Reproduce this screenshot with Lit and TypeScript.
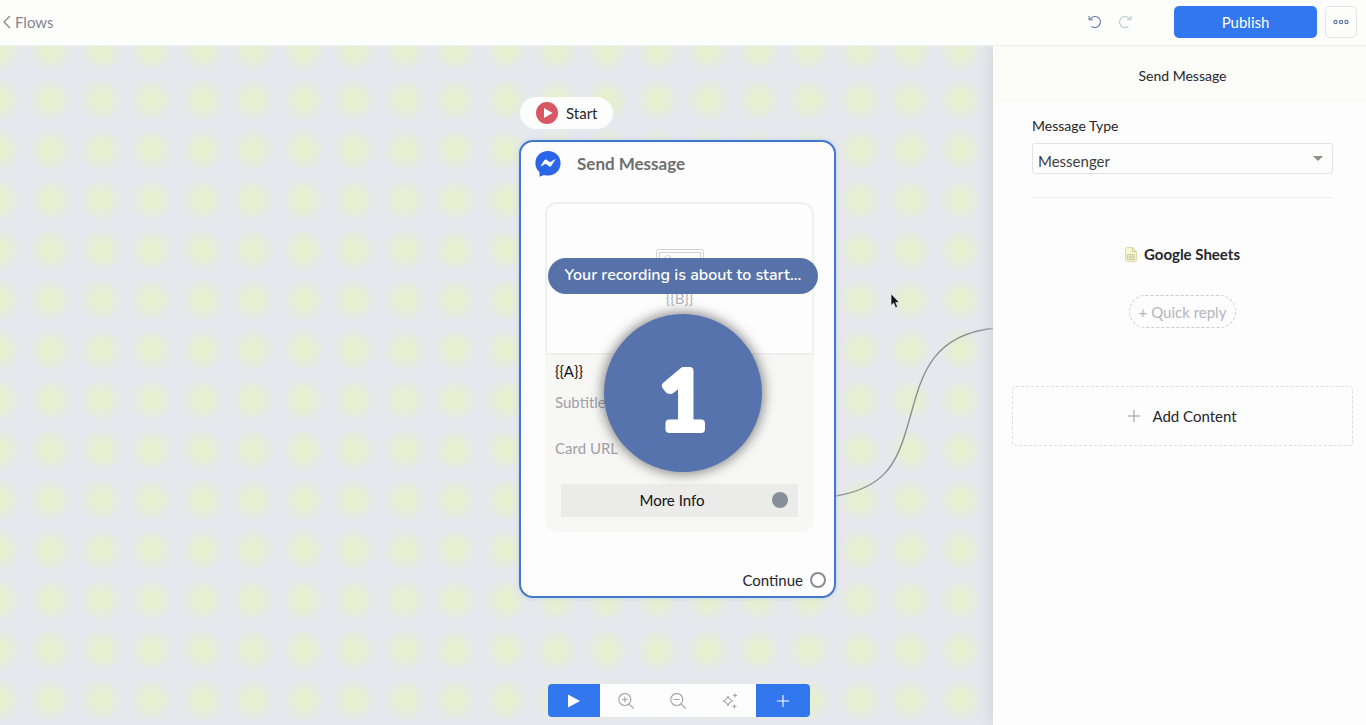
import { LitElement, html, css, svg } from "lit";
import { customElement, property } from "lit/decorators.js";

const icons = {
  back: svg`<svg width="8" height="14" viewBox="0 0 8 14"><path d="M7 1 1 7l6 6" fill="none" stroke="currentColor" stroke-width="1.3"/></svg>`,
  undo: svg`<svg width="14" height="14" viewBox="0 0 16 16" fill="none" stroke="currentColor" stroke-width="1.300"><path d="M2.300 5.200A6.300 6.300 0 1 1 4 13"/><path d="M1.300 1.200v4.200h4.400"/></svg>`,
  redo: svg`<svg width="14" height="14" viewBox="0 0 16 16" fill="none" stroke="currentColor" stroke-width="1.300"><path d="M13.700 5.200A6.300 6.300 0 1 0 12 13"/><path d="M14.700 1.200v4.200h-4.400"/></svg>`,
  dots: svg`<svg width="16" height="6" viewBox="0 0 16 6" fill="none" stroke="currentColor" stroke-width="1.2"><circle cx="2.5" cy="3" r="1.6"/><circle cx="8" cy="3" r="1.6"/><circle cx="13.5" cy="3" r="1.6"/></svg>`,
  start: svg`<svg width="22" height="22" viewBox="0 0 22 22"><circle cx="11" cy="11" r="11" fill="#d95763"/><path d="M8 6v10l8.6-5z" fill="#fff"/></svg>`,
  messenger: svg`<svg width="26" height="26" viewBox="0 0 26 26"><path d="M13 0C5.6 0 .4 5.2.4 12.2c0 3.8 1.6 6.700 4 8.800L4.600 25.800 9 23.900c1.300.4 2.600.5 4 .5 7.200 0 12.600-5.200 12.600-12.200S20.200 0 13 0z" fill="#2b66e8"/><path d="M5.200 15.700 9.300 9.300c.6-.9 1.700-1 2.500-.4l2.800 2.200c.3.200.6.200.9 0l5.300-3.400-4.400 7c-.6.9-1.700 1.100-2.500.5L11.100 13c-.3-.2-.6-.2-.9 0z" fill="#fff"/></svg>`,
  picture: svg`<svg width="48" height="36" viewBox="0 0 48 36" fill="none" stroke="#d0d0d4"><rect x=".5" y=".5" width="47" height="35" rx="2"/><rect x="3.500" y="3.500" width="41" height="29"/><circle cx="11.500" cy="9.500" r="3"/><path d="m4 29 13-12 9 8 7-6 11 9"/></svg>`,
  play: svg`<svg width="12" height="14" viewBox="0 0 12 14"><path d="M0 .5v13L12 7z" fill="currentColor"/></svg>`,
  zoomIn: svg`<svg width="16" height="16" viewBox="0 0 16 16" fill="none" stroke="currentColor" stroke-width="1.1"><circle cx="6.800" cy="6.500" r="6"/><path d="m11 10.800 4.600 4.700M6.800 3.700v5.600M4 6.500h5.600"/></svg>`,
  zoomOut: svg`<svg width="16" height="16" viewBox="0 0 16 16" fill="none" stroke="currentColor" stroke-width="1.1"><circle cx="6.800" cy="6.500" r="6"/><path d="m11 10.800 4.600 4.700M4 6.500h5.600"/></svg>`,
  sparkle: svg`<svg width="16" height="16" viewBox="0 0 16 16" fill="none" stroke="currentColor" stroke-width="1.1"><path d="M6 3c.7 3.200 1.800 4.300 5 5-3.200.7-4.300 1.800-5 5-.7-3.200-1.800-4.300-5-5 3.200-.7 4.300-1.800 5-5zM13 .5v4M11 2.500h4M12.500 11.500v4M10.500 13.500h4"/></svg>`,
  plus: svg`<svg width="12" height="12" viewBox="0 0 12 12"><path d="M6 0v12M0 6h12" stroke="currentColor" stroke-width="1.1"/></svg>`,
  sheet: svg`<svg width="12" height="15" viewBox="0 0 12 15"><path d="M1.500.5h6l4 4v8.500a1.500 1.500 0 0 1-1.500 1.500H2A1.500 1.500 0 0 1 .5 13V1.500z" fill="#f8f7d2" stroke="#dcdab0"/><path d="M7.500.5v4h4" fill="none" stroke="#c9c79a"/><path d="M2.500 7.500h7v5h-7zM2.500 10h7M5 7.500v5M7.300 7.500v5" fill="none" stroke="#cdcba2"/></svg>`,
  pointer: svg`<svg width="10" height="16" viewBox="0 0 10 16"><path d="M1 .8v11.800l2.700-2.500 1.900 4.600 2-.9-1.900-4.400 3.500-.2z" fill="#14161c" stroke="#fff" stroke-width=".6"/></svg>`,
};

const base = css`
  *, *::before, *::after { box-sizing: border-box; }
  button {
    font: inherit;
    color: inherit;
    border: 0;
    background: none;
    padding: 0;
    display: flex;
    align-items: center;
    justify-content: center;
  }
  svg { display: block; flex: none; }
`;

@customElement("flow-header")
export class FlowHeader extends LitElement {
  static styles = [base, css`
    :host { display: block; }
    .bar {
      display: flex;
      align-items: center;
      height: 46px;
      padding: 0 9px 2px 3px;
      background: #fdfdfc;
      border-bottom: 1px solid #efeff1;
    }
    .back {
      display: flex;
      align-items: center;
      gap: 4px;
      color: #85858c;
      text-decoration: none;
    }
    .history { display: flex; gap: 16px; margin: 0 42px 0 auto; }
    .undo { color: #647da6; }
    .redo { color: #b4cdd2; }
    .publish {
      width: 143px;
      height: 32px;
      border-radius: 5px;
      background: #3277ee;
      color: #fff;
    }
    .more {
      width: 32px;
      height: 32px;
      margin-left: 8px;
      border: 1px solid #e2e4ea;
      border-radius: 5px;
      color: #6078a8;
    }
  `];

  render() {
    return html`
      <header class="bar">
        <a class="back" href="#">${icons.back}<span>Flows</span></a>
        <div class="history">
          <button class="undo" aria-label="Undo">${icons.undo}</button>
          <button class="redo" aria-label="Redo">${icons.redo}</button>
        </div>
        <button class="publish">Publish</button>
        <button class="more" aria-label="More">${icons.dots}</button>
      </header>
    `;
  }
}

@customElement("message-node")
export class MessageNode extends LitElement {
  static styles = [base, css`
    :host { display: block; }
    .node {
      padding: 9px 8px 6px 14px;
      border: 2px solid #4277cc;
      border-radius: 14px;
      background: #fdfdfd;
      box-shadow: 0 0 5px #b9d2ea;
    }
    .head { display: flex; align-items: center; gap: 16px; height: 26px; }
    .name { font-size: 17px; font-weight: 700; color: #6e706f; }
    .card { margin: 25px 12px 0 10px; }
    .media {
      display: flex;
      flex-direction: column;
      align-items: center;
      height: 153px;
      padding-top: 45px;
      gap: 3px;
      border: 2px solid #efefed;
      border-radius: 12px 12px 0 0;
      color: #b4b4bd;
    }
    .body {
      padding: 6px 16px 15px 10px;
      border-radius: 0 0 12px 12px;
      background: #f7f7f6;
      color: #a0a0a4;
    }
    .line { height: 20px; margin-bottom: 11px; }
    .line.title { color: #111; }
    .line.url { margin: 26px 0; }
    .action {
      position: relative;
      width: 100%;
      height: 33px;
      padding: 0 15px 1px 0;
      background: #ebebea;
      color: #111;
    }
    .action-wrap { margin-left: 6px; }
    .dot {
      position: absolute;
      right: 10px;
      top: 8px;
      width: 16px;
      height: 16px;
      border-radius: 50%;
      background: #868f99;
    }
    .foot {
      display: flex;
      justify-content: flex-end;
      align-items: center;
      gap: 7px;
      margin-top: 38px;
      color: #25262b;
    }
    .port {
      width: 16px;
      height: 16px;
      border: 2px solid #8c8c93;
      border-radius: 50%;
    }
  `];

  render() {
    return html`
      <article class="node">
        <div class="head">${icons.messenger}<span class="name">Send Message</span></div>
        <div class="card">
          <div class="media">${icons.picture}<span>{{B}}</span></div>
          <div class="body">
            <div class="line title">{{A}}</div>
            <div class="line">Subtitle</div>
            <div class="line url">Card URL</div>
            <div class="action-wrap">
              <button class="action">More Info<span class="dot"></span></button>
            </div>
          </div>
        </div>
        <div class="foot"><span>Continue</span><span class="port"></span></div>
      </article>
    `;
  }
}

@customElement("message-panel")
export class MessagePanel extends LitElement {
  static styles = [base, css`
    :host { display: block; }
    .panel {
      height: 100%;
      background: #fdfdfd;
      color: #25262b;
      box-shadow: 0 0 16px #c8d0d4;
    }
    .title {
      margin: 0;
      height: 57px;
      padding: 20px 13px 0 19px;
      background: #fbfbf7;
      font-size: 14px;
      font-weight: 400;
      text-align: center;
    }
    .content { padding: 13px 13px 0 19px; }
    .field { margin: 0 20px; padding-bottom: 23px; border-bottom: 1px solid #ededee; }
    .field label { display: block; margin-bottom: 7px; font-size: 14px; }
    .picker { position: relative; }
    .picker::after {
      content: "";
      position: absolute;
      right: 10px;
      top: 13px;
      border: 5px solid transparent;
      border-top-color: #8f9083;
      border-bottom: 0;
    }
    select {
      display: block;
      width: 100%;
      height: 31px;
      padding: 4px 5px 0;
      border: 1px solid #e3e3e6;
      border-radius: 3px;
      background: transparent;
      color: #3c3d42;
      font: inherit;
      appearance: none;
    }
    .sheets {
      display: flex;
      align-items: center;
      justify-content: center;
      gap: 7px;
      margin-top: 46px;
      font-weight: 700;
    }
    .reply {
      height: 33px;
      margin: 31px auto 0;
      padding: 0 9px;
      border: 1px dashed #cbcbd2;
      border-radius: 17px;
      color: #b5b5bd;
    }
    .add {
      width: 100%;
      height: 60px;
      margin-top: 58px;
      gap: 12px;
      border: 1px dashed #dcdce2;
      border-radius: 4px;
    }
    .add svg { color: #9a9a9f; }
  `];

  render() {
    return html`
      <aside class="panel">
        <h2 class="title">Send Message</h2>
        <div class="content">
          <div class="field">
            <label for="type">Message Type</label>
            <div class="picker">
              <select id="type"><option>Messenger</option></select>
            </div>
          </div>
          <div class="sheets">${icons.sheet}<span>Google Sheets</span></div>
          <button class="reply">+ Quick reply</button>
          <button class="add">${icons.plus}<span>Add Content</span></button>
        </div>
      </aside>
    `;
  }
}

@customElement("record-countdown")
export class RecordCountdown extends LitElement {
  @property({ type: Number }) count = 1;

  static styles = [base, css`
    :host { display: block; }
    .stack {
      display: flex;
      flex-direction: column;
      align-items: center;
      gap: 20px;
      color: #fff;
    }
    .note {
      height: 36px;
      padding: 0 17px;
      border-radius: 18px;
      background: #5672a9;
      font: 600 16px/35px Nunito, "Open Sans", "Noto Sans", sans-serif;
      white-space: nowrap;
    }
    .disc {
      border-radius: 50%;
      background: #5673ae;
      box-shadow: 0 0 12px 2px rgba(60, 62, 60, 0.6);
    }
    .digit {
      font: 400 82px Lato, sans-serif;
      fill: #fff;
      stroke: #fff;
      stroke-width: 8px;
      stroke-linejoin: round;
      text-anchor: middle;
    }
  `];

  render() {
    return html`
      <div class="stack" role="status">
        <div class="note">Your recording is about to start...</div>
        <svg class="disc" width="158" height="158" viewBox="0 0 158 158">
          <text class="digit" x="79" y="115">${this.count}</text>
        </svg>
      </div>
    `;
  }
}

@customElement("app-root")
export class AppRoot extends LitElement {
  static styles = [base, css`
    :host { display: block; }
    .app {
      position: relative;
      display: flex;
      flex-direction: column;
      height: 100vh;
      overflow: hidden;
      font: 15px/20px Lato, "Open Sans", sans-serif;
      background-color: #e6e8ee;
      background-image:
        radial-gradient(circle at 0 50%, rgba(231, 242, 196, 0.85), rgba(231, 242, 196, 0.6) 10px, rgba(231, 242, 196, 0) 22px),
        radial-gradient(circle at 100% 50%, rgba(231, 242, 196, 0.85), rgba(231, 242, 196, 0.6) 10px, rgba(231, 242, 196, 0) 22px);
      background-size: 51px 50px;
      background-position: 0 25px;
      background-repeat: round repeat;
    }
    .work { display: flex; flex: 1; min-height: 0; overflow: hidden; }
    .canvas { position: relative; flex: 1; min-width: 0; overflow: hidden; }
    .side { flex: none; width: 373px; position: relative; }
    .start {
      position: absolute;
      left: 520px;
      top: 51px;
      display: flex;
      align-items: center;
      gap: 8px;
      height: 32px;
      padding: 0 16px;
      border-radius: 16px;
      background: #fdfdfd;
      color: #25262b;
    }
    .message { position: absolute; left: 519px; top: 94px; width: 317px; }
    .wire { position: absolute; left: 836px; top: 281px; }
    .pointer { position: absolute; left: 890px; top: 247px; }
    .tools {
      position: absolute;
      left: 50%;
      bottom: 8px;
      display: flex;
      height: 33px;
      margin-left: -135px;
      border-radius: 4px;
      overflow: hidden;
      background: #fdfdfd;
      color: #a2a2a8;
    }
    .tools button { width: 52px; }
    .tools .main { background: #3277ee; color: #fff; }
    .tools .last { width: 54px; }
    .overlay {
      position: absolute;
      inset: 0;
      display: flex;
      align-items: center;
      justify-content: center;
      padding-top: 5px;
      pointer-events: none;
    }
  `];

  render() {
    return html`
      <div class="app">
        <flow-header></flow-header>
        <main class="work">
          <section class="canvas">
            <div class="start">${icons.start}<span>Start</span></div>
            <svg class="wire" width="160" height="172" viewBox="0 0 160 172">
              <path d="M0 169C46 161 60 139 70 104 84 60 87 8 160 1" fill="none" stroke="#8d8f92" stroke-width="1.4"/>
            </svg>
            <message-node class="message"></message-node>
            <div class="pointer">${icons.pointer}</div>
          </section>
          <message-panel class="side"></message-panel>
        </main>
        <nav class="tools" aria-label="Canvas tools">
          <button class="main" aria-label="Preview">${icons.play}</button>
          <button aria-label="Zoom in">${icons.zoomIn}</button>
          <button aria-label="Zoom out">${icons.zoomOut}</button>
          <button aria-label="Arrange">${icons.sparkle}</button>
          <button class="main last" aria-label="Add step">${icons.plus}</button>
        </nav>
        <div class="overlay"><record-countdown .count=${1}></record-countdown></div>
      </div>
    `;
  }
}
